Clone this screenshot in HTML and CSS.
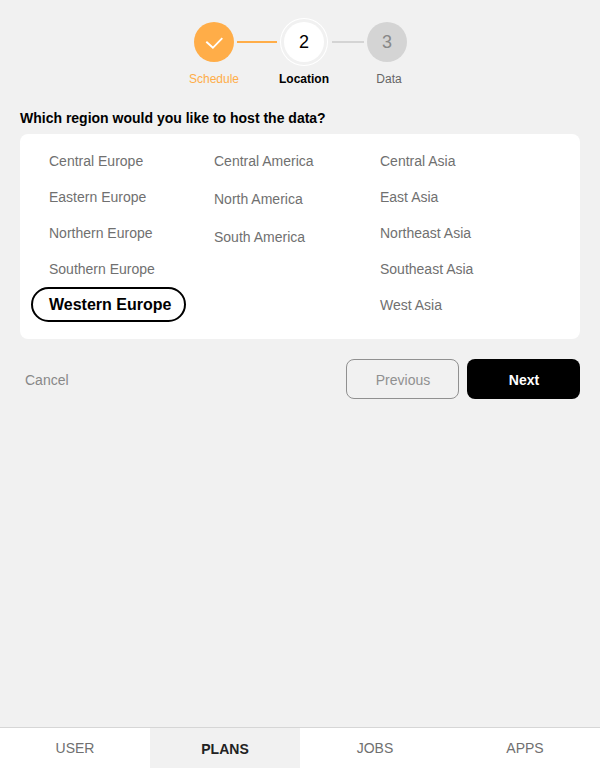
FILE: index.html
```html
<!DOCTYPE html>
<html lang="en">
<head>
<meta charset="utf-8">
<title>Location</title>
<link rel="stylesheet" href="styles.css">
</head>
<body>
<main class="content">
  <ol class="stepper">
    <li class="step done"><span class="dot"><svg width="20" height="16" viewBox="0 0 20 16"><path d="M2.300 7.700l6.600 6.100L18.300 4.200" fill="none" stroke="#fff" stroke-width="1.900"/></svg></span><span class="label">Schedule</span></li>
    <li class="line line-done"></li>
    <li class="step current"><span class="dot">2</span><span class="label">Location</span></li>
    <li class="line line-next"></li>
    <li class="step next"><span class="dot">3</span><span class="label">Data</span></li>
  </ol>
  <h1 class="question">Which region would you like to host the data?</h1>
  <section class="regions">
    <ul class="column europe"><li>Central Europe</li><li>Eastern Europe</li><li>Northern Europe</li><li>Southern Europe</li><li class="selected">Western Europe</li></ul>
    <ul class="column america"><li>Central America</li><li>North America</li><li>South America</li></ul>
    <ul class="column asia"><li>Central Asia</li><li>East Asia</li><li>Northeast Asia</li><li>Southeast Asia</li><li>West Asia</li></ul>
  </section>
  <div class="actions">
    <button class="cancel">Cancel</button>
    <button class="btn previous">Previous</button>
    <button class="btn primary">Next</button>
  </div>
</main>
<nav class="tabs"><a>USER</a><a class="active">PLANS</a><a>JOBS</a><a>APPS</a></nav>
</body>
</html>
```
FILE: styles.css
```css
* { box-sizing: border-box; }
body { margin: 0; height: 768px; display: flex; flex-direction: column; background: #f1f1f1; font: 14px/20px "Liberation Sans", Arial, sans-serif; color: #707070; }
ul, ol { list-style: none; margin: 0; padding: 0; }
.content { flex: 1; padding: 18px 20px 0; }
.stepper { display: flex; height: 90px; padding-left: 169px; }
.step { display: flex; flex-direction: column; align-items: center; width: 50px; }
.dot { display: flex; align-items: center; justify-content: center; width: 40px; height: 40px; margin-top: 4px; border-radius: 50%; font-size: 18px; }
.label { margin-top: 7px; font-size: 12px; white-space: nowrap; }
.done .dot { background: #ffad48; }
.done .label { color: #ffad48; }
.current .dot { background: #fff; color: #000; box-shadow: 0 0 0 3px #f1f1f1, 0 0 0 4px #fff; }
.current .label { color: #000; font-weight: bold; }
.next .dot { background: #d4d4d4; color: #888; }
.next .label { color: #666; margin-left: 4px; }
.line { height: 2px; margin-top: 23px; }
.line-done { width: 40px; margin-left: -2px; margin-right: 2px; background: #ffad48; }
.line-next { width: 32px; margin: 23px -2px 0 3px; background: #d4d4d4; }
.question { margin: 0 0 6px; font-size: 14px; line-height: 20px; color: #000; }
.regions { display: flex; height: 205px; padding: 9px 11px 0; background: #fff; border-radius: 8px; }
.column li { height: 36px; line-height: 36px; padding-left: 18px; }
.europe { width: 165px; }
.america { width: 166px; }
.column.america li { height: 38px; }
.europe .selected { width: 155px; height: 35px; line-height: 31px; padding-left: 16px; border: 2px solid #000; border-radius: 18px; font-size: 16px; font-weight: bold; color: #000; }
.actions { display: flex; gap: 8px; margin-top: 20px; }
button { padding: 0; border: 0; background: none; font: inherit; }
.cancel { margin-right: auto; padding: 2px 5px 0; color: #888; }
.btn { width: 113px; height: 40px; border-radius: 8px; padding: 2px 0 0 1px; }
.previous { border: 1px solid #909090; color: #909090; }
.primary { background: #000; color: #fff; font-weight: bold; }
.tabs { display: grid; grid-template-columns: repeat(4, 1fr); height: 41px; border-top: 1px solid #d6d6d6; background: #fff; }
.tabs a { line-height: 40px; text-align: center; }
.tabs .active { background: #f1f1f1; color: #222; font-weight: bold; line-height: 42px; height: 40px; }
```
